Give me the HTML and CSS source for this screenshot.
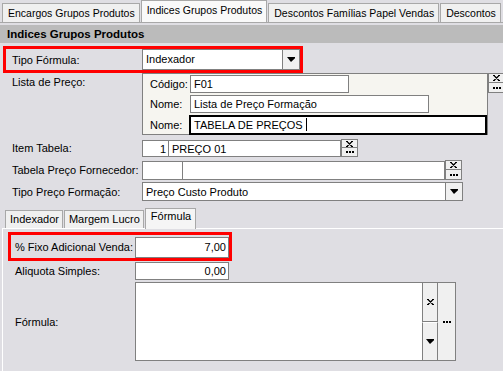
FILE: index.html
```html
<!DOCTYPE html>
<html lang="pt">

<head>
    <meta charset="UTF-8">
    <title>Indices Grupos Produtos</title>
    <link rel="stylesheet" href="styles.css">
</head>

<body>
    <div class="tabs">
        <div class="tab">Encargos Grupos Produtos</div>
        <div class="tab active">Indices Grupos Produtos</div>
        <div class="tab">Descontos Famílias Papel Vendas</div>
        <div class="tab">Descontos</div>
    </div>
    <div class="page">
        <div class="title">Indices Grupos Produtos</div>
        <div class="form">
            <div class="row mark">
                <div class="label">Tipo Fórmula:</div>
                <div class="combo type-combo">
                    <span class="text">Indexador</span>
                    <span class="drop"><svg width="8" height="5" viewBox="0 0 8 5"><path d="M0 0h8v1.2L4 5z" fill="#000"/></svg></span>
                </div>
            </div>
            <div class="row lista">
                <div class="label">Lista de Preço:</div>
                <div class="panel">
                    <div class="prow">
                        <span class="plabel">Código:</span>
                        <div class="field code">F01</div>
                    </div>
                    <div class="prow">
                        <span class="plabel">Nome:</span>
                        <div class="field name">Lista de Preço Formação</div>
                    </div>
                    <div class="prow">
                        <span class="plabel">Nome:</span>
                        <div class="field focus">TABELA DE PREÇOS <span class="caret"></span></div>
                    </div>
                </div>
                <div class="mini-btns short">
                    <div class="mini"><svg width="7" height="6" viewBox="0 0 7 6"><path d="M0 .5h2M5 .5h2M0 5.5h2M5 5.5h2M1 .5l5 5M6 .5l-5 5" stroke="#000" stroke-width="1.2" fill="none"/></svg></div>
                    <div class="mini"><svg width="8" height="2" viewBox="0 0 8 2"><path d="M0 0h2v2H0zM3 0h2v2H3zM6 0h2v2H6z" fill="#000"/></svg></div>
                </div>
            </div>
            <div class="row item">
                <div class="label">Item Tabela:</div>
                <div class="field num">1</div>
                <div class="field item-name">PREÇO 01</div>
                <div class="mini-btns">
                    <div class="mini"><svg width="7" height="6" viewBox="0 0 7 6"><path d="M0 .5h2M5 .5h2M0 5.5h2M5 5.5h2M1 .5l5 5M6 .5l-5 5" stroke="#000" stroke-width="1.2" fill="none"/></svg></div>
                    <div class="mini"><svg width="8" height="2" viewBox="0 0 8 2"><path d="M0 0h2v2H0zM3 0h2v2H3zM6 0h2v2H6z" fill="#000"/></svg></div>
                </div>
            </div>
            <div class="row forn">
                <div class="label">Tabela Preço Fornecedor:</div>
                <div class="field forn-code"></div>
                <div class="field forn-name"></div>
                <div class="mini-btns">
                    <div class="mini"><svg width="7" height="6" viewBox="0 0 7 6"><path d="M0 .5h2M5 .5h2M0 5.5h2M5 5.5h2M1 .5l5 5M6 .5l-5 5" stroke="#000" stroke-width="1.2" fill="none"/></svg></div>
                    <div class="mini"><svg width="8" height="2" viewBox="0 0 8 2"><path d="M0 0h2v2H0zM3 0h2v2H3zM6 0h2v2H6z" fill="#000"/></svg></div>
                </div>
            </div>
            <div class="row tipo">
                <div class="label">Tipo Preço Formação:</div>
                <div class="combo tipo-combo">
                    <span class="text">Preço Custo Produto</span>
                    <span class="drop"><svg width="8" height="5" viewBox="0 0 8 5"><path d="M0 0h8v1.2L4 5z" fill="#000"/></svg></span>
                </div>
            </div>
        </div>
        <div class="sub">
            <div class="subtabs">
                <div class="subtab">Indexador</div>
                <div class="subtab">Margem Lucro</div>
                <div class="subtab active">Fórmula</div>
            </div>
            <div class="subpanel">
                <div class="row mark mark-small">
                    <div class="label">% Fixo Adicional Venda:</div>
                    <div class="field value big">7,00</div>
                </div>
                <div class="row aliq">
                    <div class="label">Aliquota Simples:</div>
                    <div class="field value">0,00</div>
                </div>
                <div class="row formula">
                    <div class="label">Fórmula:</div>
                    <div class="memo"></div>
                    <div class="memo-btns">
                        <div class="mbtn"><svg width="7" height="6" viewBox="0 0 7 6"><path d="M0 .5h2M5 .5h2M0 5.5h2M5 5.5h2M1 .5l5 5M6 .5l-5 5" stroke="#000" stroke-width="1.2" fill="none"/></svg></div>
                        <div class="mbtn"><svg width="8" height="5" viewBox="0 0 8 5"><path d="M0 0h8v1.2L4 5z" fill="#000"/></svg></div>
                    </div>
                    <div class="memo-more"><svg width="8" height="2" viewBox="0 0 8 2"><path d="M0 0h2v2H0zM3 0h2v2H3zM6 0h2v2H6z" fill="#000"/></svg></div>
                </div>
            </div>
        </div>
    </div>
</body>

</html>
```

FILE: styles.css
```css
body {
    margin: 0;
    width: 503px;
    height: 371px;
    overflow: hidden;
    font-family: "Liberation Sans", Arial, sans-serif;
    font-size: 11px;
    color: #000;
    background-color: #dfdee3;
}

.tabs {
    height: 23px;
    display: flex;
    align-items: flex-end;
    padding-left: 2px;
    border-bottom: 1px solid #a8a8a8;
    box-sizing: border-box;
    white-space: nowrap;
    font-size: 10.5px;
    overflow: hidden;
}

.tab {
    height: 19px;
    box-sizing: border-box;
    border: 1px solid #a8a8a8;
    border-bottom: none;
    background-color: #f0f0f0;
    padding: 3px 4px 0 5px;
    margin-right: 1px;
    flex: none;
}

.tab.active {
    height: 23px;
    margin-bottom: -1px;
    padding-top: 3px;
    background-color: #f9f9f9;
}

.title {
    margin-top: 2px;
    height: 18px;
    line-height: 18px;
    padding-left: 7px;
    background-color: #bbbbbb;
    font-size: 11.5px;
    font-weight: bold;
}

.form {
    padding: 3px 0 0 3px;
}

.row {
    display: flex;
    align-items: center;
}

.label {
    width: 139px;
    padding-left: 9px;
    box-sizing: border-box;
    flex: none;
    white-space: nowrap;
}

.mark {
    width: 300px;
    height: 27px;
    box-sizing: border-box;
    border: 3px solid #ff0000;
}

.mark .label {
    width: 136px;
    padding-left: 6px;
}

.field {
    height: 18px;
    box-sizing: border-box;
    border: 1px solid #808080;
    background-color: #fff;
    padding: 0 3px;
    line-height: 16px;
    white-space: nowrap;
    flex: none;
}

.combo {
    height: 20px;
    box-sizing: border-box;
    border: 1px solid #808080;
    background-color: #fff;
    display: flex;
    align-items: stretch;
}

.combo .text {
    flex: 1;
    padding-left: 3px;
    line-height: 18px;
}

.combo .drop {
    width: 16px;
    border-left: 1px solid #808080;
    background-color: #f0f0f0;
    display: flex;
    align-items: center;
    justify-content: center;
}

.type-combo {
    width: 158px;
    height: 21px;
}

.lista {
    align-items: flex-start;
}

.lista .label {
    padding-top: 3px;
}

.panel {
    width: 346px;
    height: 62px;
    box-sizing: border-box;
    border: 1px solid #808080;
    background-color: #f6f5f0;
    padding: 1px 0 0 7px;
    display: flex;
    flex-direction: column;
    gap: 2px;
}

.prow {
    display: flex;
    align-items: center;
}

.plabel {
    width: 40px;
}

.code {
    width: 159px;
}

.name {
    width: 239px;
}

.focus {
    width: 298px;
    height: 20px;
    margin-left: -1px;
    border: 2px solid #000;
    padding-left: 3px;
}

.caret {
    display: inline-block;
    width: 1px;
    height: 13px;
    background-color: #000;
    vertical-align: -2px;
}

.mini-btns {
    display: flex;
    flex-direction: column;
    flex: none;
}

.mini {
    width: 17px;
    height: 9px;
    box-sizing: border-box;
    border: 1px solid #808080;
    background-color: #f0f0f0;
    display: flex;
    align-items: center;
    justify-content: center;
}

.mini + .mini {
    height: 9px;
    border-top: none;
}

.short .mini {
    height: 10px;
}

.item {
    margin-top: 4px;
}

.num {
    width: 27px;
    height: 17px;
    text-align: right;
    padding-right: 2px;
}

.item-name {
    width: 173px;
    height: 17px;
    margin-left: -1px;
}

.forn {
    margin-top: 3px;
}

.forn .mini {
    height: 10px;
}

.forn-code {
    width: 41px;
    height: 19px;
}

.forn-name {
    width: 263px;
    height: 19px;
    margin-left: -1px;
}

.tipo {
    margin-top: 2px;
}

.tipo-combo {
    width: 321px;
    height: 19px;
}

.sub {
    margin-top: 7px;
}

.subtabs {
    height: 20px;
    display: flex;
    align-items: flex-end;
    padding-left: 5px;
}

.subtab {
    height: 18px;
    box-sizing: border-box;
    border: 1px solid #a8a8a8;
    border-bottom: none;
    background-color: #f0f0f0;
    padding: 2px 3px 0 4px;
    margin-right: 1px;
}

.subtab.active {
    height: 21px;
    margin-bottom: -1px;
    background-color: #f5f5f5;
    padding: 1px 4px 0 5px;
}

.subpanel {
    margin-left: 2px;
    height: 150px;
    border-top: 1px solid #fff;
    border-left: 1px solid #fff;
    padding: 3px 0 0 5px;
}

.mark-small {
    width: 224px;
    height: 29px;
}

.mark-small .label {
    width: 124px;
    padding-left: 4px;
}

.value {
    width: 94px;
    text-align: right;
    padding-right: 2px;
}

.big {
    height: 21px;
    line-height: 19px;
    margin-top: 1px;
}

.aliq {
    margin-top: 1px;
}

.aliq .label {
    width: 127px;
    padding-left: 7px;
}

.formula {
    margin-top: 2px;
    height: 79px;
}

.formula .label {
    width: 127px;
    padding-left: 7px;
}

.memo {
    width: 288px;
    height: 79px;
    box-sizing: border-box;
    border: 1px solid #808080;
    background-color: #fff;
}

.memo-btns {
    width: 16px;
    height: 79px;
    margin-left: -1px;
    display: flex;
    flex-direction: column;
}

.mbtn {
    flex: 1;
    box-sizing: border-box;
    border: 1px solid #808080;
    background-color: #f0f0f0;
    display: flex;
    align-items: center;
    justify-content: center;
}

.mbtn + .mbtn {
    border-top: 1px solid #ffffff;
}

.memo-more {
    width: 18px;
    height: 79px;
    box-sizing: border-box;
    border: 1px solid #808080;
    border-left: none;
    background-color: #f0f0f0;
    display: flex;
    align-items: center;
    justify-content: center;
}
```
